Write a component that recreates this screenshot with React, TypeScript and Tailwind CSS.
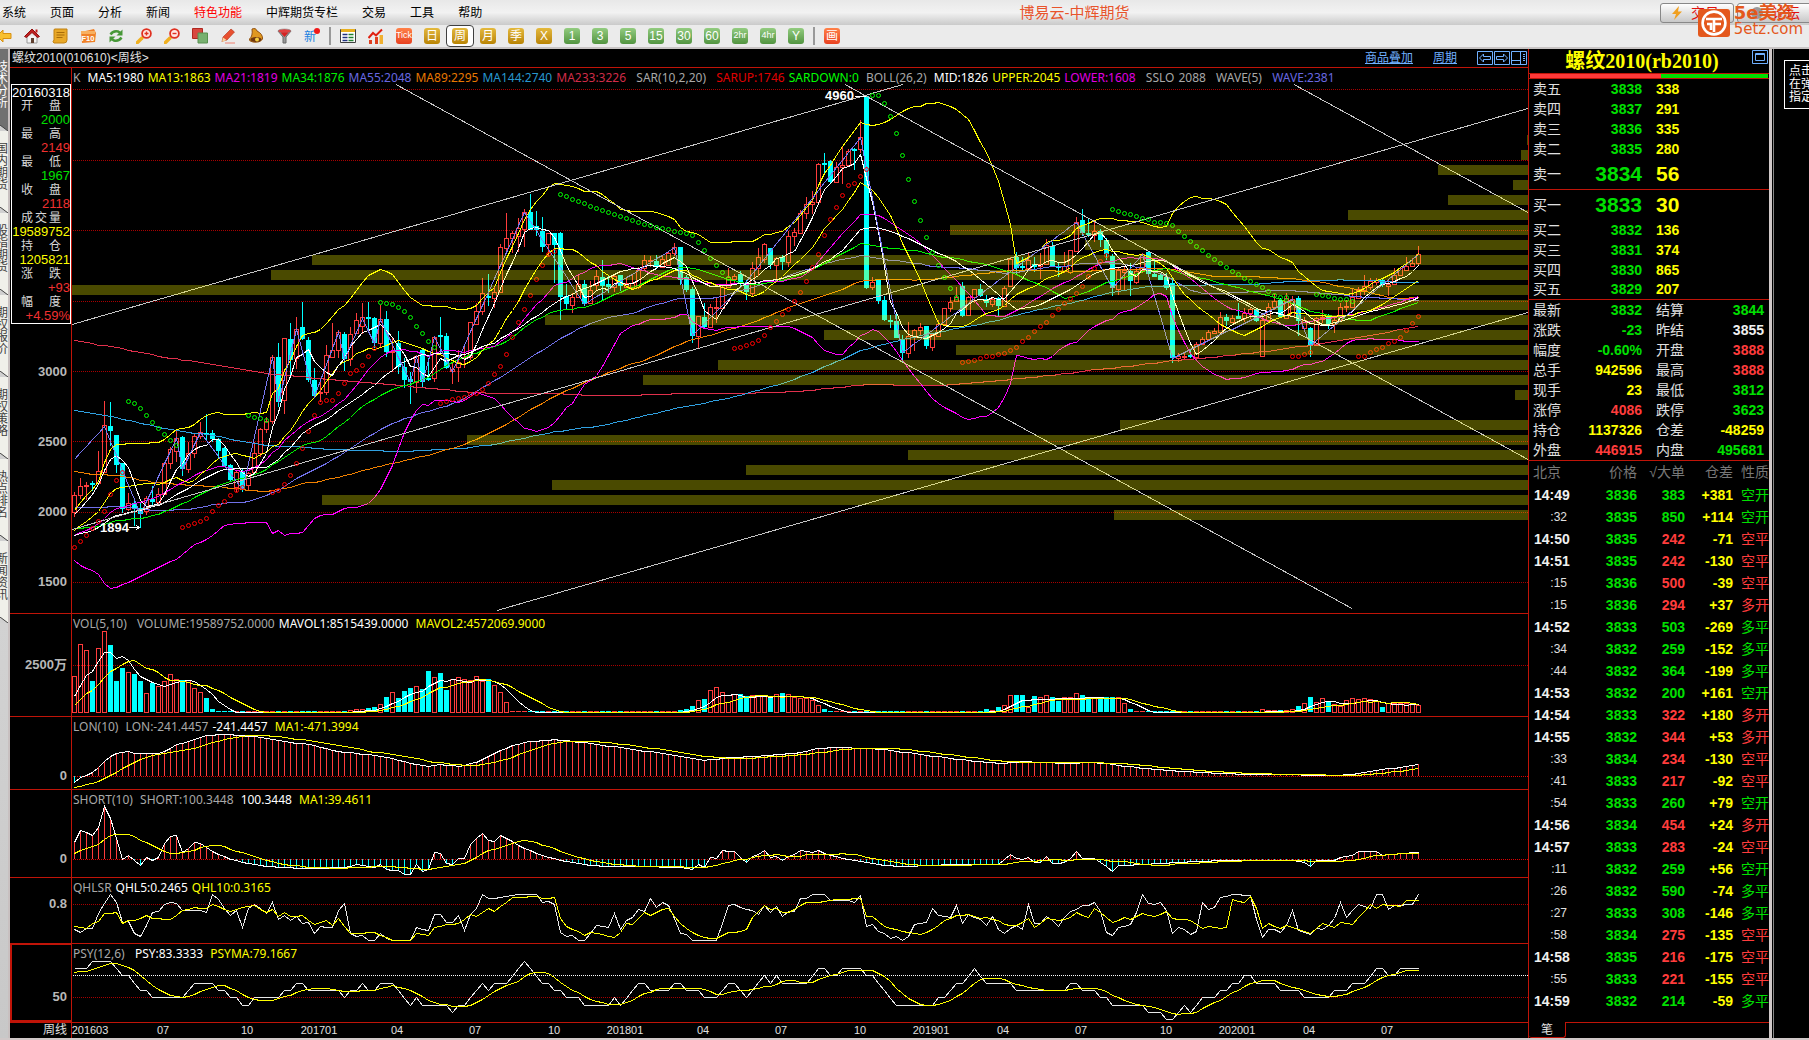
import type { ReactNode } from "react";

/* ---------- chart data ---------- */

// one entry per week: direction, then y of high / body top / body bottom / low
const BARS = `
+492 495 512 517|+478 486 495 499|+482 485 485 500|-481 483 485 491|+451 471 483 484|+401 425 472 472|-402 426 431 446|-435 435 465 473|-463 463 509 513|+493 503 509 511
-500 503 508 526|-503 508 514 528|+496 498 511 515|-486 499 502 505|+488 494 502 504|+463 463 494 494|+447 449 463 469|+430 438 451 462|-436 437 469 476|+442 453 469 473
+434 436 453 458|+422 432 436 439|-414 433 435 441|-430 433 439 442|-438 439 451 458|-447 448 466 467|-464 465 480 481|+470 472 487 492|-469 472 489 492|+472 473 485 491
+442 453 472 474|+428 429 453 457|+417 421 429 433|+355 357 421 424|-343 357 402 407|+338 338 400 414|-323 339 360 378|+317 329 358 369|-302 327 339 340|-337 340 380 382
-368 380 396 397|+378 392 393 402|+345 355 392 395|+323 350 357 358|+330 332 350 358|-332 334 359 371|+327 334 359 366|+313 320 333 333|+303 317 326 334|-302 317 319 333
-317 318 343 348|+305 319 343 347|-311 319 352 357|+338 351 352 372|-331 343 367 374|-358 367 380 388|-372 379 382 404|+355 356 382 393|-348 350 382 387|-358 378 380 381
+336 337 378 382|-317 335 337 353|-333 336 368 369|+363 369 371 384|+350 362 367 382|+345 357 358 368|+322 322 357 360|+303 311 324 325|+278 293 311 315|-274 296 298 306
+286 292 298 308|+244 247 292 293|+213 238 248 253|+231 233 238 253|+218 228 236 252|+209 212 229 247|-194 212 230 230|-211 226 230 236|-217 231 247 252|+233 233 244 256
-233 233 245 283|-232 233 297 320|-284 296 304 309|+293 297 305 313|+274 284 297 297|-280 284 304 306|+281 290 303 303|+270 276 285 290|-260 277 286 300|-275 284 287 293
+274 276 287 292|-275 275 286 291|+277 283 287 287|+275 283 288 290|+267 270 287 289|+255 260 268 271|+256 260 261 267|-255 261 266 268|+256 259 267 267|+252 253 265 265
+243 247 253 256|-247 247 280 285|-275 277 290 292|-287 289 336 343|+316 316 336 348|-303 317 327 328|+304 307 327 328|+297 307 308 323|+285 287 308 308|+268 277 287 287
+274 276 279 283|-271 274 283 288|-280 283 292 300|+262 268 293 297|+248 257 268 276|+243 244 259 263|-248 248 265 269|+257 258 265 280|-255 257 262 270|+231 236 262 267
+228 232 236 246|+210 213 233 234|+197 204 213 219|+191 202 204 214|+163 164 202 204|-153 163 164 173|-160 161 182 184|+162 167 182 182|+146 165 167 184|+149 151 165 165
-148 149 151 170|+120 137 149 153|-95 96 288 289|+277 282 287 290|-280 280 301 304|-296 300 320 321|-315 320 321 328|-314 321 338 338|-335 339 353 362|+322 336 353 358
+329 330 337 351|+323 327 330 335|-326 326 346 349|+333 334 347 351|+320 324 336 337|+308 308 324 324|+297 302 308 312|+287 297 301 301|-282 286 316 317|+296 297 315 315
+289 289 297 303|-284 289 296 297|-295 299 303 307|+297 299 304 307|-297 298 306 317|+286 288 306 307|+257 259 286 286|-252 257 268 275|-257 266 268 270|+253 260 268 270
-257 264 267 272|+253 264 266 279|+239 245 264 264|-242 246 266 267|-263 266 267 277|+252 266 271 273|+250 250 272 274|+217 222 251 252|-209 220 233 236|-218 233 235 237
+222 231 235 242|-229 231 240 247|-238 240 254 260|-254 256 288 296|+267 270 289 295|+266 270 272 290|-263 271 281 296|+268 271 282 284|+253 254 270 273|-251 252 274 276
-258 274 277 277|-273 275 280 280|-273 277 288 290|-277 283 358 363|+353 356 358 362|+352 356 357 360|-350 355 356 358|+342 344 357 361|+337 339 344 344|+330 332 339 339
+328 331 333 333|+312 317 332 332|-314 317 321 326|+315 318 322 322|-303 316 319 319|+308 313 318 322|+308 309 313 319|-308 309 321 322|+313 320 356 357|+303 307 320 322
+294 301 307 310|-298 300 317 317|+293 298 318 318|+296 299 316 316|-296 298 321 336|+317 320 328 330|-327 328 345 357|+317 318 345 345|+310 317 319 323|-314 317 324 329
+318 320 324 333|+303 307 320 320|+300 306 307 312|+288 297 307 307|+287 289 298 298|+275 286 290 295|+278 281 287 290|+278 280 282 285|-278 280 285 287|+280 284 286 296
+268 275 284 284|+267 268 275 275|+257 266 270 270|+258 263 266 266|+246 254 263 266`
	.trim()
	.split(/[|\n]/)
	.map((s) => {
		const [high, top, bottom, low] = s.slice(1).split(" ").map(Number);
		const up = s[0] === "+";
		return { up, high, top, bottom, low, close: up ? top : bottom };
	});

const SAR: [number, string, number[]][] = [
	[0, "#f00", [547, 541, 535, 528, 521, 511, 494, 480, 472]],
	[9, "#0f0", [401, 403, 408, 415, 422, 428, 434, 440, 445]],
	[18, "#f00", [527, 525, 523, 521, 518, 511, 505, 501, 495, 490, 487]],
	[29, "#0f0", [415, 417, 418, 420]],
	[33, "#f00", [492, 490, 484, 475, 463, 448, 431, 415, 402, 400, 400, 393, 383, 373, 370, 365, 356, 348]],
	[51, "#0f0", [302, 303, 304, 307, 311, 317, 326, 333, 341, 347]],
	[61, "#f00", [403, 401, 399, 398, 397, 394, 393, 389, 383, 374, 366, 354, 337, 322, 309, 295, 279, 265, 254, 251]],
	[81, "#0f0", [194, 196, 199, 201, 203, 206, 208, 210, 212, 214, 216, 218, 220, 222, 224, 225, 227, 228, 229, 231, 232, 233, 235, 242, 250, 258, 265, 272, 278]],
	[110, "#f00", [348, 347, 345, 343, 340, 335, 327, 321, 314, 309, 301, 292, 281, 267, 254, 235, 219, 207, 195, 185, 183, 176, 169]],
	[133, "#0f0", [95, 95, 103, 116, 133, 155, 179, 201, 220, 237, 252, 265, 277, 288, 297]],
	[148, "#f00", [362, 361, 360, 358, 356, 356, 354, 353, 350, 347, 341, 337, 331, 326, 322, 315, 309, 303, 298, 293, 286, 276, 268, 261, 255]],
	[173, "#0f0", [209, 211, 213, 214, 216, 218, 219, 222, 222, 223, 225, 231, 236, 241, 246, 250, 255, 259, 263, 267, 271, 274, 278, 281, 284, 287, 291, 295, 297, 297]],
	[203, "#f00", [356, 356, 354, 352]],
	[207, "#0f0", [294, 295, 296, 298, 299, 299, 301]],
	[214, "#f00", [356, 356, 352, 349, 347, 343, 341, 337, 330, 323, 316]],
];

const WAVE = "0 459,5 426,11 514,17 438,18 469,21 432,28 489,33 357,34 402,37 329,40 396,44 332,45 359,48 318,50 343,51 319,56 382,57 356,58 382,60 337,63 371,75 212,85 304,100 247,103 335,112 281,131 137,138 352,167 222,173 288,178 254,183 358,203 299,206 345,224 254";

// price distribution: top of the bar, left end
const PROFILE = [
	[135, 1527], [150, 1521], [165, 1438], [180, 1513], [195, 1448], [210, 1348], [225, 950], [240, 1085],
	[255, 312], [270, 271], [285, 72], [300, 950], [315, 545], [330, 824], [345, 956], [360, 718], [375, 643],
	[390, 1515], [420, 1120], [435, 467], [450, 908], [465, 746], [480, 552], [495, 322], [510, 1114],
];

const TRENDS = [
	[72, 324, 903, 84], [396, 84, 1352, 608], [845, 84, 1528, 459],
	[1294, 84, 1528, 212], [72, 529, 1528, 108], [497, 610, 1528, 312],
];

const ones = (n: number) => Array<number>(n).fill(1);
const VOLUME = [
	36, 68, 62, 31, 64, 81, 67, 31, 44, 40, 38, 31, 19, 29, 26, 31, 38, 33, 32, 32, 24, 20, 14, 3, ...ones(22),
	2, 3, 3, 4, 5, 8, 15, 20, 14, 21, 24, 26, 23, 41, 35, 39, 22, 33, 35, 33, 32, 36, 31, 33, 27, 20, 10, ...ones(28),
	2, 3, 6, 12, 13, 22, 25, 20, 10, 18, 18, 16, 17, 17, 17, 15, 18, 19, 18, 15, 14, 14, 12, 7, 3, ...ones(26),
	3, 2, 5, 7, 17, 17, 17, 5, 16, 15, 17, 15, 11, 15, 15, 19, 17, 15, 14, 14, 15, 15, 15, 9, 3, ...ones(21),
	3, 2, 2, 2, 2, 3, 6, 9, 15, 10, 14, 11, 8, 6, 12, 14, 13, 14, 13, 11, 5, 9, 9, 9, 9, 9, 7,
];

const LON = "0 782,1 777,3 772,4 767,5 761,6 756,7 753,9 751,10 753,14 753,15 751,17 744,19 741,22 735,25 734,30 736,34 740,40 745,44 751,50 755,53 758,56 763,59 766,61 764,64 766,67 762,70 753,73 745,76 741,80 739,86 743,92 748,98 753,105 760,109 757,113 756,117 754,121 752,124 748,127 747,133 748,140 753,146 758,154 763,158 761,166 763,169 762,172 763,174 765,180 769,188 772,196 774,203 774,206 775,211 775,214 773,218 769,221 767,224 764";
const SHORT = "0 842,1 830,2 832,3 835,4 827,5 806,6 818,7 838,8 859,9 855,10 860,11 865,12 857,13 860,14 857,15 843,16 836,17 835,18 852,19 848,20 842,21 843,23 851,26 859,30 864,34 867,40 868,45 867,47 864,50 867,51 864,52 869,54 870,55 874,56 874,57 864,58 871,59 869,60 852,61 853,62 863,63 864,64 858,65 858,66 844,67 838,68 833,69 840,70 841,71 835,72 838,75 848,78 855,81 860,85 864,88 866,95 866,101 867,103 869,104 864,105 867,106 857,107 858,108 850,110 851,112 862,113 856,114 854,115 850,116 857,117 856,118 860,119 856,120 854,121 850,123 852,124 850,126 855,130 860,134 864,138 866,146 864,154 864,156 854,157 858,158 859,159 857,160 862,161 862,162 856,163 863,165 862,166 858,167 851,168 858,170 858,172 866,173 871,174 865,178 864,184 862,191 860,203 860,205 862,206 866,207 860,210 860,211 857,213 855,214 851,217 851,218 855,221 853,224 852";
const QHL5 = "0 929,1 932,2 928,3 928,4 913,5 903,6 894,7 902,8 922,9 921,10 933,11 936,12 925,13 912,14 911,15 904,16 902,17 903,18 910,21 910,22 912,23 894,24 899,25 908,26 915,27 910,28 927,29 908,30 904,31 908,32 913,33 902,34 919,35 915,36 920,37 916,38 923,39 922,40 933,41 926,43 927,44 910,45 903,46 933,47 936,48 935,49 940,50 940,51 933,52 938,53 940,56 940,57 927,59 930,60 914,61 914,62 922,63 922,64 915,65 930,66 914,67 908,68 894,69 898,71 897,74 894,77 894,78 902,79 901,80 904,81 932,82 936,83 935,84 940,85 940,86 933,87 925,89 927,90 913,91 929,92 920,93 917,94 909,95 911,96 898,97 907,98 902,99 905,100 918,101 933,102 934,103 940,107 940,108 923,109 905,110 904,111 907,113 910,114 914,115 905,116 912,117 906,118 916,119 911,120 911,121 898,122 898,123 894,125 894,126 900,129 900,130 902,131 895,132 926,133 924,134 931,135 933,136 938,137 936,138 940,139 936,140 924,142 922,143 908,144 915,146 917,147 905,148 923,149 914,151 919,152 925,153 916,154 929,155 933,156 928,157 925,158 929,159 904,160 923,161 923,162 916,163 920,164 926,165 917,166 911,167 909,168 905,169 905,170 902,171 911,172 932,173 935,174 927,176 924,177 912,178 894,179 903,180 904,181 902,182 910,183 933,184 927,185 929,186 934,187 931,188 902,189 909,190 907,191 897,193 894,196 895,197 919,198 937,199 929,200 929,201 932,202 925,203 910,204 930,206 934,207 928,208 929,209 925,210 918,211 902,212 917,213 910,214 904,216 908,217 894,218 894,219 909,220 905,223 904,224 894";
const QHL10 = "0 926,2 928,3 923,4 921,5 913,7 912,8 923,9 920,10 920,12 915,13 918,16 919,18 910,20 907,22 908,23 904,26 911,28 907,30 905,32 912,33 909,34 916,35 912,36 916,38 915,40 924,42 920,43 925,44 918,46 933,50 932,53 940,56 940,57 933,59 935,60 927,62 924,64 923,66 914,67 916,69 908,70 911,73 897,77 896,78 898,80 897,81 918,82 926,84 931,85 935,86 932,88 934,90 937,91 932,92 923,93 924,95 912,96 915,98 909,99 908,101 923,103 932,105 937,107 938,109 932,110 932,112 929,113 917,115 905,116 909,117 908,118 912,119 912,122 902,124 902,127 899,131 898,132 916,133 916,135 926,137 929,139 932,141 934,143 929,145 920,147 915,149 914,151 918,152 917,154 920,155 924,157 925,159 918,160 927,162 918,164 920,166 917,167 912,169 917,170 908,171 912,173 922,175 917,176 919,178 913,180 916,182 911,183 918,186 920,188 928,189 926,191 928,192 927,193 899,195 902,196 896,197 908,198 928,199 923,201 928,202 925,206 933,208 923,210 927,211 922,213 924,216 904,217 908,218 904,221 906,222 900,224 900";
const PSY = "0 968,2 968,3 961,6 961,8 975,9 975,11 990,12 990,13 997,18 997,20 983,23 983,24 990,25 990,26 997,27 997,28 1005,29 1005,30 997,34 997,35 990,36 990,37 983,38 983,39 990,44 990,45 997,46 990,47 990,48 983,49 990,50 990,51 983,53 983,54 990,56 1005,57 997,58 1005,62 1005,63 1012,64 1005,65 1005,66 997,68 983,69 990,70 983,72 983,75 961,78 983,79 983,80 990,81 990,82 997,84 997,85 1005,89 1005,90 997,91 1005,94 983,95 983,96 990,99 990,100 983,101 983,102 990,104 990,105 997,107 997,109 983,110 983,112 997,115 975,116 983,117 975,118 983,122 983,124 968,125 968,126 975,127 975,128 968,131 968,132 975,133 975,137 1005,143 1005,144 997,145 997,147 983,148 983,150 968,152 983,156 983,157 990,165 990,166 983,167 983,168 990,170 990,171 997,172 997,173 1005,178 1005,179 1012,181 1012,182 1019,183 1019,185 1005,186 1012,188 997,190 997,191 990,192 990,193 983,194 983,195 975,196 975,197 983,200 983,201 990,204 990,205 997,209 997,210 990,212 990,213 983,215 983,217 968,218 968,219 975,220 975,221 968,224 968";

const MONTHS: [number, string][] = [
	[90, "201603"], [163, "07"], [247, "10"], [319, "201701"], [397, "04"], [475, "07"], [554, "10"], [625, "201801"], [703, "04"],
	[781, "07"], [860, "10"], [931, "201901"], [1003, "04"], [1081, "07"], [1166, "10"], [1237, "202001"], [1309, "04"], [1387, "07"],
];

/* ---------- chart helpers ---------- */

const px = (i: number) => 74.5 + 6 * i;
// snapped to pixel centres so the lines stay one pixel thin
const pts = (v: number[]) => v.map((y, i) => `${px(i)},${Math.round(y) + 0.5}`).join(" ");

// fills the weeks between two knots of an "index y" list
function spread(src: string): number[] {
	const knots = src.split(",").map((s) => s.split(" ").map(Number));
	const out: number[] = [];
	for (let k = 0; k < knots.length - 1; k++) {
		const [a, ya] = knots[k];
		const [b, yb] = knots[k + 1];
		for (let i = a; i < b; i++) out.push(ya + ((yb - ya) * (i - a)) / (b - a));
	}
	out.push(knots[knots.length - 1][1]);
	return out;
}

function sma(values: number[], n: number, before: number[]): number[] {
	const all = [...before, ...values];
	return values.map((_, i) => {
		const end = before.length + i + 1;
		return all.slice(end - n, end).reduce((s, v) => s + v, 0) / n;
	});
}

const flat = (v: number, n: number) => Array<number>(n).fill(v);
const HISTORY = [
	...flat(227, 89), ...flat(308, 55), ...flat(412, 34), ...flat(470, 21), ...flat(502, 8),
	...flat(532, 5), ...flat(545, 8), ...flat(542, 8), ...flat(519, 5),
];
const CLOSES = BARS.map((b) => b.close);
const MID = sma(CLOSES, 26, HISTORY);
const DEV = CLOSES.map((_, i) => {
	const all = [...HISTORY, ...CLOSES];
	const win = all.slice(HISTORY.length + i - 25, HISTORY.length + i + 1);
	return 2 * Math.sqrt(win.reduce((s, v) => s + (v - MID[i]) ** 2, 0) / 26);
});

const AVERAGES: [number, string][] = [
	[233, "#e0304c"], [144, "#30a0e0"], [89, "#f08000"], [55, "#7070e8"], [34, "#00f000"], [21, "#f000f0"], [13, "#ff0"], [5, "#fff"],
];

function Line({ v, c }: { v: number[]; c: string }) {
	return <polyline points={pts(v)} fill="none" stroke={c} />;
}

function Dots({ y, c = "#a80000" }: { y: number; c?: string }) {
	return <line x1="73" x2="1528" y1={y + 0.5} y2={y + 0.5} stroke={c} strokeDasharray="1 1" />;
}

function Plot({ top, className, children }: { top: number; className: string; children: ReactNode }) {
	const h = { 88: 525, 634: 82, 737: 52, 810: 67, 898: 45, 964: 58, 1023: 15 }[top];
	return (
		<svg
			viewBox={`72 ${top} 1456 ${h}`}
			preserveAspectRatio="none"
			shapeRendering="crispEdges"
			className={`block w-full overflow-visible ${className}`}
		>
			{children}
		</svg>
	);
}

function Legend({ items }: { items: [string, string][] }) {
	return (
		<div className="flex h-5 items-center gap-1 overflow-hidden pl-px font-['Noto_Sans',sans-serif] text-xs whitespace-pre">
			{items.map(([text, color]) => (
				<span key={text} className={color}>{text}</span>
			))}
		</div>
	);
}

function Panel({ axis, active, legend, children }: { axis: ReactNode; active?: boolean; legend: [string, string][]; children: ReactNode }) {
	return (
		<section className="flex border-t border-[#c01408]">
			<div className={`w-[62px] shrink-0 border-r border-[#c01408] ${active ? "border-b-2 border-l-2 border-t" : ""}`}>{axis}</div>
			<div className="min-w-0 flex-1">
				<Legend items={legend} />
				{children}
			</div>
		</section>
	);
}

function Tag({ children, className }: { children: ReactNode; className: string }) {
	return <div className={`pr-1 text-right text-[13px] leading-4 font-bold text-[#b8b8b8] ${className}`}>{children}</div>;
}

/* ---------- toolbar ---------- */

function Key({ children, tone, on }: { children: string; tone: "gold" | "green" | "red"; on?: boolean }) {
	const bg = {
		gold: "from-[#e4b93c] to-[#b98400]",
		green: "from-[#93cc80] to-[#529440]",
		red: "from-[#ff8048] to-[#e84020]",
	}[tone];
	return (
		<button type="button" className={`flex h-[22px] w-7 items-center justify-center rounded-[4px] ${on ? "border border-[#404040] bg-white" : ""}`}>
			<span className={`flex h-4 w-4 items-center justify-center rounded-[3px] bg-linear-to-b text-white ${bg} ${children.length > 2 ? "text-[9px]" : "text-xs"}`}>
				{children}
			</span>
		</button>
	);
}

function Tool({ label, children }: { label: string; children: ReactNode }) {
	return (
		<button type="button" aria-label={label} className="flex h-[22px] w-7 items-center justify-center">
			<svg viewBox="0 0 16 16" className="h-4 w-4" fill="none">{children}</svg>
		</button>
	);
}

function Magnifier({ plus }: { plus?: boolean }) {
	return (
		<>
			<path d="M1 15 L6 10" stroke="#f0b020" strokeWidth="3.4" strokeLinecap="round" />
			<circle cx="10.5" cy="5.5" r="4.4" fill="#ffe8e4" stroke="#e03020" strokeWidth="1.8" />
			<path d={plus ? "M8.5 5.5h4M10.5 3.5v4" : "M8.5 5.5h4"} stroke="#e03020" strokeWidth="1.4" />
		</>
	);
}

function Toolbar() {
	return (
		<div className="flex h-6 shrink-0 items-start overflow-hidden border-b-2 border-[#c8c4c4] bg-[#ebebeb]">
			<div className="-ml-2.5 flex shrink-0">
				<Tool label="后退"><path d="M1 8 L7 2v3.5h8v5H7V14z" fill="#f8c030" stroke="#d89010" /></Tool>
				<Tool label="首页">
					<path d="M3 8v7h10V8" fill="#f4f4f4" stroke="#999" />
					<path d="M8 1 L0.5 8.5 2.5 9.5 8 4.5 13.5 9.5 15.5 8.5z" fill="#c02020" stroke="#901010" />
					<path d="M11.5 1.5h2v3h-2z" fill="#c02020" />
					<path d="M7 10h3v5H7z" fill="#604030" />
				</Tool>
				<Tool label="公告">
					<path d="M2 2 Q2 0.5 4 1h11v11q0 3-3 3H2q-2-1 0-3z" fill="#e8a828" stroke="#c08010" />
					<path d="M4.5 4.5h8M4.5 7h8M4.5 9.5h6" stroke="#a86c08" />
				</Tool>
				<Tool label="F10">
					<path d="M1 4 L14 1 16 5 15 14 2 15z" fill="#f08028" />
					<path d="M1 3h14v3H1z" fill="#f8b060" />
					<text x="8" y="12.5" fontSize="7.5" fontWeight="bold" textAnchor="middle" fill="#fff">F10</text>
				</Tool>
				<Tool label="刷新">
					<path d="M2.5 6.5 Q5 2.5 10 3.5 L12.5 5" stroke="#489838" strokeWidth="2.4" />
					<path d="M14.5 1.5v6h-6z" fill="#489838" />
					<path d="M13.5 9.5 Q11 13.5 6 12.5 L3.5 11" stroke="#489838" strokeWidth="2.4" />
					<path d="M1.5 14.5v-6h6z" fill="#489838" />
				</Tool>
				<Tool label="放大"><Magnifier plus /></Tool>
				<Tool label="缩小"><Magnifier /></Tool>
				<Tool label="叠加">
					<path d="M0.5 0.5h10v10h-10z" fill="#d84840" stroke="#b02820" />
					<path d="M6 5h9.5v10H6z" fill="#78b070" stroke="#589050" />
				</Tool>
				<Tool label="画线">
					<path d="M3 13 L2 14 3 9 11 1 14.5 4 7 12z" fill="#e85030" stroke="#b03018" strokeWidth="0.6" />
					<path d="M2 14 L3 9.5 6.5 12z" fill="#f8d8a0" />
					<path d="M5 15h10" stroke="#f08070" />
				</Tool>
				<Tool label="预警">
					<path d="M4 1 Q8 -0.5 9 3 Q15 6 14.5 11 Q12 15 5 14 Q0.5 13 1.5 11 Q5 8 4 1z" fill="#e09820" stroke="#905010" />
					<ellipse cx="8" cy="11.5" rx="5.5" ry="2.6" fill="#703810" />
					<circle cx="9" cy="11.5" r="2" fill="#f8d040" />
				</Tool>
				<Tool label="筛选">
					<path d="M2 3 L7 9v6h3V9l5-6z" fill="#989898" stroke="#686868" />
					<ellipse cx="8.5" cy="3" rx="6.5" ry="2" fill="#e04040" stroke="#888" strokeWidth="0.6" />
					<path d="M4.5 4.5h8L8.5 9z" fill="#d82020" />
				</Tool>
				<Tool label="新">
					<text x="6" y="13" fontSize="12" textAnchor="middle" fill="#2080e0">新</text>
					<circle cx="13" cy="3" r="3" fill="#f01818" />
				</Tool>
				<i className="mx-[3px] h-[18px] w-0.5 self-center bg-[#999]" />
				<Tool label="报价">
					<path d="M0.5 1.5h15v13h-15z" fill="#fff" stroke="#404040" />
					<path d="M1 1h14v3H1z" fill="#e8b020" />
					<path d="M2.5 6.5h5M2.5 9.5h5M2.5 12.5h5" stroke="#203080" strokeWidth="1.4" />
					<path d="M8.5 6.5h5M8.5 9.5h5M8.5 12.5h5" stroke="#208030" strokeWidth="1.4" />
				</Tool>
				<Tool label="分时">
					<path d="M1 12v4h3v-4zM7 9v7h3V9z" fill="#e04020" />
					<path d="M11.5 7v9h3.5V7z" fill="#f0b030" />
					<path d="M0.5 10 L5 5 8 7.5 14 1.5" stroke="#e02010" strokeWidth="2" />
				</Tool>
				<Key tone="red">Tick</Key>
				<Key tone="gold">日</Key>
				<Key tone="gold" on>周</Key>
				<Key tone="gold">月</Key>
				<Key tone="gold">季</Key>
				<Key tone="gold">X</Key>
				{["1", "3", "5", "15", "30", "60", "2hr", "4hr", "Y"].map((k) => (
					<Key key={k} tone="green">{k}</Key>
				))}
				<i className="mx-[3px] h-[18px] w-0.5 self-center bg-[#999]" />
				<Key tone="red">画</Key>
			</div>
		</div>
	);
}

/* ---------- header ---------- */

function Brand() {
	return (
		<div className="absolute top-1 right-1.5 z-10 flex items-center gap-1 text-[#e4581c]">
			<svg viewBox="0 0 32 28" className="mt-1 h-7 w-8">
				<rect width="32" height="28" rx="3" fill="#e4581c" />
				<circle cx="16" cy="14" r="11.4" fill="none" stroke="#fff" strokeWidth="2.6" />
				<path d="M8 10h16M16 10v13M16 15h7M9 15h4v6" stroke="#fff" strokeWidth="2.6" fill="none" />
			</svg>
			<div className="font-['DejaVu_Sans','Noto_Sans_CJK_SC',sans-serif]">
				<div className="text-lg leading-[18px] font-bold">5e美资</div>
				<div className="text-[15px] leading-[15px]">5etz.com</div>
			</div>
		</div>
	);
}

function MenuBar() {
	const items = ["系统", "页面", "分析", "新闻", "特色功能", "中辉期货专栏", "交易", "工具", "帮助"];
	return (
		<header className="relative grid h-[25px] shrink-0 grid-cols-[1.5fr_auto_1fr] items-center bg-linear-to-b from-[#e8e8e8] via-[#f2f2f2] to-[#cacaca]">
			<nav className="flex gap-6 pl-0.5 text-xs text-black">
				{items.map((t) => (
					<button key={t} type="button" className={t === "特色功能" ? "text-[#ff0000]" : ""}>{t}</button>
				))}
			</nav>
			<h1 className="text-[15px] leading-5 text-[#e8542c]">博易云-中辉期货</h1>
			<div className="-mr-4 flex justify-end gap-[3px] overflow-hidden text-sm text-[#e01010]">
				<button type="button" className="flex h-5 w-[74px] items-center gap-2 rounded-[3px] border border-[#888] bg-linear-to-b from-white to-[#c8c8c8] pl-2.5">
					<svg viewBox="0 0 12 14" className="h-3.5 w-3"><path d="M8 0 L1 8h4L3 14 11 5.5H7z" fill="#f0a020" /></svg>
					交易
				</button>
				<button type="button" className="flex h-5 w-[88px] items-center gap-2 rounded-[3px] border border-[#888] bg-linear-to-b from-white to-[#c8c8c8] pl-3">
					<svg viewBox="0 0 14 14" className="h-3.5 w-3.5"><circle cx="7" cy="7" r="6" fill="#999" /></svg>
					论坛
				</button>
			</div>
			<Brand />
		</header>
	);
}

/* ---------- left side tabs ---------- */

function SideTabs() {
	const tabs = ["技术分析", "国内期货", "股指期货", "期权报价", "期权策略", "热点排名", "新闻资讯"];
	return (
		<aside className="w-2.5 shrink-0 overflow-hidden border-r-2 border-[#c8c0c0] bg-linear-to-b from-[#e0e0e0] to-[#c8c8c8]">
			{tabs.map((t, i) => (
				<button
					key={t}
					type="button"
					className={`relative flex h-[82px] w-2 items-start justify-end pt-3 text-xs leading-3 ${i === 0 ? "bg-[#707070] text-white" : "bg-[#f0f0ea] text-[#404040]"}`}
				>
					<span className="w-3 shrink-0 break-all">{t}</span>
					<svg viewBox="0 0 8 6" className="absolute bottom-0 left-0 h-1.5 w-2"><path d="M0 0 L8 6H0z" fill="#d0d0d0" /><path d="M0 0 L8 6" stroke="#404040" /></svg>
				</button>
			))}
		</aside>
	);
}

/* ---------- chart area ---------- */

const G = "text-[#a8a8a8]";
const W = "text-white";
const Y = "text-[#ffff00]";

function CursorBox() {
	const rows: [string, string, string][] = [
		["开盘", "2000", "text-[#00e000]"], ["最高", "2149", "text-[#f03030]"], ["最低", "1967", "text-[#00e000]"], ["收盘", "2118", "text-[#f03030]"],
		["成交量", "19589752", Y], ["持仓", "1205821", Y], ["涨跌", "+93", "text-[#f03030]"], ["幅度", "+4.59%", "text-[#f03030]"],
	];
	return (
		<dl className="mt-4 ml-px w-[60px] border border-white bg-black text-[13px]">
			<div className="h-[14px] text-center leading-[15px] text-white">20160318</div>
			{rows.map(([label, value, color]) => (
				<div key={label} className="flex h-7 flex-col">
					<dt className="flex h-3.5 items-center justify-between px-[9px] text-xs text-[#d8d8d8]">
						{[...label].map((c) => <span key={c}>{c}</span>)}
					</dt>
					<dd className={`h-3.5 text-right leading-[14px] ${color}`}>{value}</dd>
				</div>
			))}
		</dl>
	);
}

function PricePlot() {
	return (
		<Plot top={88} className="h-[525px]">
			{[89, 160, 230, 301, 371, 441, 512, 582].map((y) => <Dots key={y} y={y} />)}
			{BARS.map((b, i) => {
				const x = px(i);
				return b.up ? (
					<g key={i} stroke="#ff3c3c" fill="none">
						<path d={`M${x} ${b.high}V${b.top}M${x} ${b.bottom}V${b.low}`} />
						<rect x={x - 2} y={b.top + 0.5} width="4" height={Math.max(b.bottom - b.top, 1)} />
					</g>
				) : (
					<g key={i} fill="#00ffff">
						<rect x={x - 0.5} y={b.high} width="1" height={b.low - b.high} />
						<rect x={x - 2.5} y={b.top} width="5" height={Math.max(b.bottom - b.top, 2)} />
					</g>
				);
			})}
			{AVERAGES.map(([n, c]) => <Line key={n} v={sma(CLOSES, n, HISTORY)} c={c} />)}
			<Line v={MID} c="#fff" />
			<Line v={MID.map((m, i) => m - DEV[i])} c="#ff0" />
			<Line v={MID.map((m, i) => m + DEV[i])} c="#f0f" />
			<Line v={spread(WAVE)} c="#7878f0" />
			{TRENDS.map(([x1, y1, x2, y2]) => (
				<line key={`${x1}-${y1}`} x1={x1} y1={y1 + 0.5} x2={x2} y2={y2 + 0.5} stroke="#c4c4c4" />
			))}
			{SAR.map(([from, c, ys]) => ys.map((y, k) => (
				<circle key={from + k} cx={px(from + k)} cy={y + 0.5} r="2" fill="none" stroke={c} shapeRendering="auto" />
			)))}
			<g fill="#fff" fontSize="13" fontWeight="bold" stroke="none">
				<text x="825" y="100">4960</text>
				<text x="100" y="532">1894</text>
			</g>
			<path d="M855 96.5h11M129 527.5h10M136 525l3 2.5-3 2.5" stroke="#fff" fill="none" />
			{PROFILE.map(([y, x]) => (
				<rect key={y} x={x} y={y} width={1528 - x} height="10" fill="#ff0" fillOpacity="0.29" />
			))}
		</Plot>
	);
}

// hollow or solid columns standing on the base line
function VolumePlot() {
	return (
		<Plot top={634} className="h-[82px]">
			<Dots y={665} />
			{VOLUME.map((h, i) => {
				const x = px(i);
				return BARS[i].up && h > 1
					? <rect key={i} x={x - 2} y={712.5 - h} width="4" height={h} stroke="#ff3c3c" fill="none" />
					: <rect key={i} x={x - 2.5} y={712 - h} width="5" height={h} fill={BARS[i].up ? "#ff3c3c" : "#0ff"} />;
			})}
			<Line v={sma(VOLUME, 5, flat(12, 5)).map((v) => 713 - v)} c="#fff" />
			<Line v={sma(VOLUME, 10, flat(5, 10)).map((v) => 713 - v)} c="#ff0" />
		</Plot>
	);
}

function Sticks({ v, base }: { v: number[]; base: number }) {
	return (
		<>
			{v.map((y, i) => (
				<path key={i} d={`M${px(i)} ${base}V${y}`} stroke={y < base ? "#ff3c3c" : "#0ff"} />
			))}
		</>
	);
}

function Charts() {
	const lon = spread(LON);
	const short = spread(SHORT);
	const psy = spread(PSY);
	const main: [string, string][] = [
		["K ", G], ["MA5:1980", W], ["MA13:1863", Y], ["MA21:1819", "text-[#e000e0]"], ["MA34:1876", "text-[#00f000]"], ["MA55:2048", "text-[#6868e0]"],
		["MA89:2295", "text-[#e87800]"], ["MA144:2740", "text-[#2898d0]"], ["MA233:3226", "text-[#d02c48]"], ["  SAR(10,2,20)", G],
		["  SARUP:1746", "text-[#e00000]"], ["SARDOWN:0", "text-[#00ff00]"], [" BOLL(26,2)", G], [" MID:1826", W], ["UPPER:2045", Y],
		["LOWER:1608", "text-[#e000e0]"], ["  SSLO", G], ["2088", G], ["  WAVE(5)", G], ["  WAVE:2381", "text-[#6868e0]"],
	];
	return (
		<main className="min-w-0 flex-1 border-r border-[#c01408] bg-black">
			<div className="flex h-[18px] items-center justify-between pl-0.5 text-xs text-[#e0e0e0]">
				<span>螺纹2010(010610)&lt;周线&gt;</span>
				<div className="flex items-center gap-5 text-[#70b0ff]">
					<a href="#overlay" className="underline">商品叠加</a>
					<a href="#period" className="underline">周期</a>
					<svg viewBox="0 0 51 14" className="h-3.5 w-[51px]" fill="none" stroke="#70b0ff">
						<path d="M0.5 0.5h15v13h-15zM17.5 0.5h15v13h-15zM34.5 0.5h15v13h-15z" />
						<path d="M2.5 7 L6.5 3v2.5h7v3h-7V11zM30.5 7 L26.5 3v2.5h-7v3h7V11z" />
						<path d="M34.5 9.5h9M43.5 0.5v13M46 3.5h2M46 5.5h2M46 7.5h2M46 9.5h2" />
					</svg>
				</div>
			</div>

			<Panel
				legend={main}
				axis={
					<>
						<CursorBox />
						<Tag className="mt-10">3000</Tag>
						<Tag className="mt-[54px]">2500</Tag>
						<Tag className="mt-[54px]">2000</Tag>
						<Tag className="mt-[54px]">1500</Tag>
					</>
				}
			>
				<PricePlot />
			</Panel>

			<Panel legend={[["VOL(5,10)", G], ["  VOLUME:19589752.0000", G], ["MAVOL1:8515439.0000", W], [" MAVOL2:4572069.9000", Y]]} axis={<Tag className="mt-[43px]">2500万</Tag>}>
				<VolumePlot />
			</Panel>

			<Panel legend={[["LON(10)", G], [" LON:-241.4457", G], ["-241.4457", W], [" MA1:-471.3994", Y]]} axis={<Tag className="mt-[51px]">0</Tag>}>
				<Plot top={737} className="h-[52px]">
					<Dots y={776} c="#e00000" />
					<Sticks v={lon} base={776} />
					<Line v={lon} c="#fff" />
					<Line v={sma(lon, 10, flat(787, 10))} c="#ff0" />
				</Plot>
			</Panel>

			<Panel legend={[["SHORT(10)", G], [" SHORT:100.3448", G], [" 100.3448", W], [" MA1:39.4611", Y]]} axis={<Tag className="mt-[61px]">0</Tag>}>
				<Plot top={810} className="h-[67px]">
					<Dots y={859} c="#e00000" />
					<Sticks v={short} base={859} />
					<Line v={short} c="#fff" />
					<Line v={sma(short, 10, flat(854, 10))} c="#ff0" />
				</Plot>
			</Panel>

			<Panel legend={[["QHLSR", G], ["QHL5:0.2465", W], ["QHL10:0.3165", Y]]} axis={<Tag className="mt-[18px]">0.8</Tag>}>
				<Plot top={898} className="h-[45px]">
					<Dots y={904} />
					<Line v={spread(QHL5)} c="#e8e8e8" />
					<Line v={spread(QHL10)} c="#ff0" />
				</Plot>
			</Panel>

			<Panel active legend={[["PSY(12,6)", G], ["  PSY:83.3333", W], [" PSYMA:79.1667", Y]]} axis={<Tag className="mt-11">50</Tag>}>
				<Plot top={964} className="h-[58px]">
					<Dots y={975} c="#fff" />
					<Dots y={997} />
					<Line v={psy} c="#e8e8e8" />
					<Line v={sma(psy, 6, flat(973, 6))} c="#ff0" />
				</Plot>
			</Panel>

			<div className="flex h-4 border-t border-[#c01408] text-[#e0e0e0]">
				<div className="w-[62px] shrink-0 border-r border-[#c01408] pr-1 text-right text-xs leading-[15px]">周线</div>
				<div className="min-w-0 flex-1">
					<Plot top={1023} className="h-[15px]">
						{MONTHS.map(([x, t]) => (
							<text key={x} x={x} y="1034" fontSize="11" textAnchor="middle" fill="#e0e0e0">{t}</text>
						))}
					</Plot>
				</div>
			</div>
		</main>
	);
}

/* ---------- quote panel ---------- */

const UP = "text-[#ff3c3c]";
const DOWN = "text-[#00e000]";

function Depth({ rows }: { rows: [string, string, string][] }) {
	return (
		<table className="w-full table-fixed border-b border-[#c01408]">
			<tbody>
				{rows.map(([label, price, size]) => {
					const best = label.endsWith("一");
					return (
						<tr key={label} className={best ? "h-[30px]" : "h-5"}>
							<th scope="row" className="w-[45px] p-0 pl-1 text-left text-sm leading-4 font-normal text-[#e0e0e0]">{label}</th>
							<td className={`w-[68px] p-0 text-right font-bold ${DOWN} ${best ? "text-[21px] leading-5" : "text-sm leading-4"}`}>{price}</td>
							<td className={`p-0 pl-3.5 font-bold ${Y} ${best ? "text-[21px] leading-5" : "text-sm leading-4"}`}>{size}</td>
						</tr>
					);
				})}
			</tbody>
		</table>
	);
}

const STATS: [string, string, string, string, string, string][] = [
	["最新", "3832", DOWN, "结算", "3844", DOWN],
	["涨跌", "-23", DOWN, "昨结", "3855", "text-[#f0f0f0]"],
	["幅度", "-0.60%", DOWN, "开盘", "3888", UP],
	["总手", "942596", Y, "最高", "3888", UP],
	["现手", "23", Y, "最低", "3812", DOWN],
	["涨停", "4086", UP, "跌停", "3623", DOWN],
	["持仓", "1137326", Y, "仓差", "-48259", Y],
	["外盘", "446915", UP, "内盘", "495681", DOWN],
];

// time, price, size (+ bought / - sold), open interest change, kind
const TICKS = `14:49 3836 -383 +381 空开|:32 3835 -850 +114 空开|14:50 3835 +242 -71 空平|14:51 3835 +242 -130 空平|:15 3836 +500 -39 空平|:15 3836 +294 +37 多开
14:52 3833 -503 -269 多平|:34 3832 -259 -152 多平|:44 3832 -364 -199 多平|14:53 3832 -200 +161 空开|14:54 3833 +322 +180 多开|14:55 3832 +344 +53 多开
:33 3834 +234 -130 空平|:41 3833 +217 -92 空平|:54 3833 -260 +79 空开|14:56 3834 +454 +24 多开|14:57 3833 +283 -24 空平|:11 3832 -259 +56 空开
:26 3832 -590 -74 多平|:27 3833 -308 -146 多平|:58 3834 +275 -135 空平|14:58 3835 +216 -175 空平|:55 3833 +221 -155 空平|14:59 3832 -214 -59 多平`
	.split(/[|\n]/)
	.map((s) => s.split(" "));

function Quotes() {
	return (
		<aside className="flex w-60 shrink-0 flex-col bg-black">
			<div className="relative flex h-[25px] items-center justify-center border-b border-[#c01408] pr-3.5">
				<h2 className="font-['Liberation_Serif','Noto_Sans_CJK_SC',serif] text-xl leading-6 font-bold text-[#ffff00]">螺纹2010(rb2010)</h2>
				<svg viewBox="0 0 16 14" className="absolute top-px right-px h-3.5 w-4" fill="none" stroke="#70b0ff">
					<path d="M0.5 0.5h15v13h-15zM3.5 3.5h9v7h-9zM3.5 4.5h9" />
				</svg>
			</div>
			<div className="flex h-[5px] border-b border-[#c01408] px-px">
				<i className="w-[55%] bg-[#ff3838]" />
				<i className="flex-1 bg-[#00e000]" />
			</div>
			<Depth rows={[["卖五", "3838", "338"], ["卖四", "3837", "291"], ["卖三", "3836", "335"], ["卖二", "3835", "280"], ["卖一", "3834", "56"]]} />
			<Depth rows={[["买一", "3833", "30"], ["买二", "3832", "136"], ["买三", "3831", "374"], ["买四", "3830", "865"], ["买五", "3829", "207"]]} />

			<table className="w-full table-fixed border-b border-[#c01408] text-sm leading-4">
				<tbody>
					{STATS.map(([a, av, ac, b, bv, bc]) => (
						<tr key={a} className="h-5 text-[#e0e0e0]">
							<th scope="row" className="w-[45px] p-0 pl-1 text-left font-normal">{a}</th>
							<td className={`w-[68px] p-0 text-right font-bold ${ac}`}>{av}</td>
							<th scope="row" className="w-[45px] p-0 pl-3.5 text-left font-normal">{b}</th>
							<td className={`p-0 pr-[5px] text-right font-bold ${bc}`}>{bv}</td>
						</tr>
					))}
				</tbody>
			</table>

			<table className="w-full table-fixed text-right text-sm leading-4">
				<thead>
					<tr className="h-[23px] text-[#787878]">
						<th className="w-[60px] p-0 pl-1 text-left font-normal">北京</th>
						<th className="w-12 p-0 font-normal">价格</th>
						<th className="w-12 p-0 font-normal whitespace-nowrap">√大单</th>
						<th className="w-12 p-0 font-normal">仓差</th>
						<th className="p-0 font-normal">性质</th>
					</tr>
				</thead>
				<tbody>
					{TICKS.map(([time, price, size, change, kind], i) => {
						const c = size[0] === "+" ? UP : DOWN;
						return (
							<tr key={i} className="h-[22px] font-bold">
								{time[0] === ":" ? (
									<td className="p-0 pr-[22px] text-xs font-normal text-[#e0e0e0]">{time}</td>
								) : (
									<td className="p-0 pl-[5px] text-left text-[#f0f0f0]">{time}</td>
								)}
								<td className={`p-0 ${DOWN}`}>{price}</td>
								<td className={`p-0 ${c}`}>{size.slice(1)}</td>
								<td className={`p-0 ${Y}`}>{change}</td>
								<td className={`p-0 font-normal ${c}`}>{kind}</td>
							</tr>
						);
					})}
				</tbody>
			</table>

			<div className="mt-auto flex h-4 text-xs leading-[14px] text-[#e0e0e0]">
				<button type="button" className="w-[37px] rounded-b-[3px] border-r border-b border-[#c01408]">笔</button>
				<div className="flex-1 border-t border-[#c01408]" />
			</div>
		</aside>
	);
}

export default function App() {
	return (
		<div className="flex min-h-screen flex-col overflow-hidden bg-black font-['Liberation_Sans','Noto_Sans_CJK_SC',sans-serif]">
			<MenuBar />
			<Toolbar />
			<div className="flex flex-1 border-b-2 border-[#d0c8c8]">
				<SideTabs />
				<Charts />
				<Quotes />
				<div className="w-[5px] shrink-0 border-r border-l-[3px] border-r-[#888] border-l-[#d0c8c8]" />
				<aside className="w-[35px] shrink-0 overflow-hidden pt-[11px] pl-2.5">
					<p className="w-40 border border-white p-1 text-xs leading-[13px] text-white">点击右侧按钮<br />在弹出菜单中<br />指定显示内容</p>
				</aside>
			</div>
		</div>
	);
}
